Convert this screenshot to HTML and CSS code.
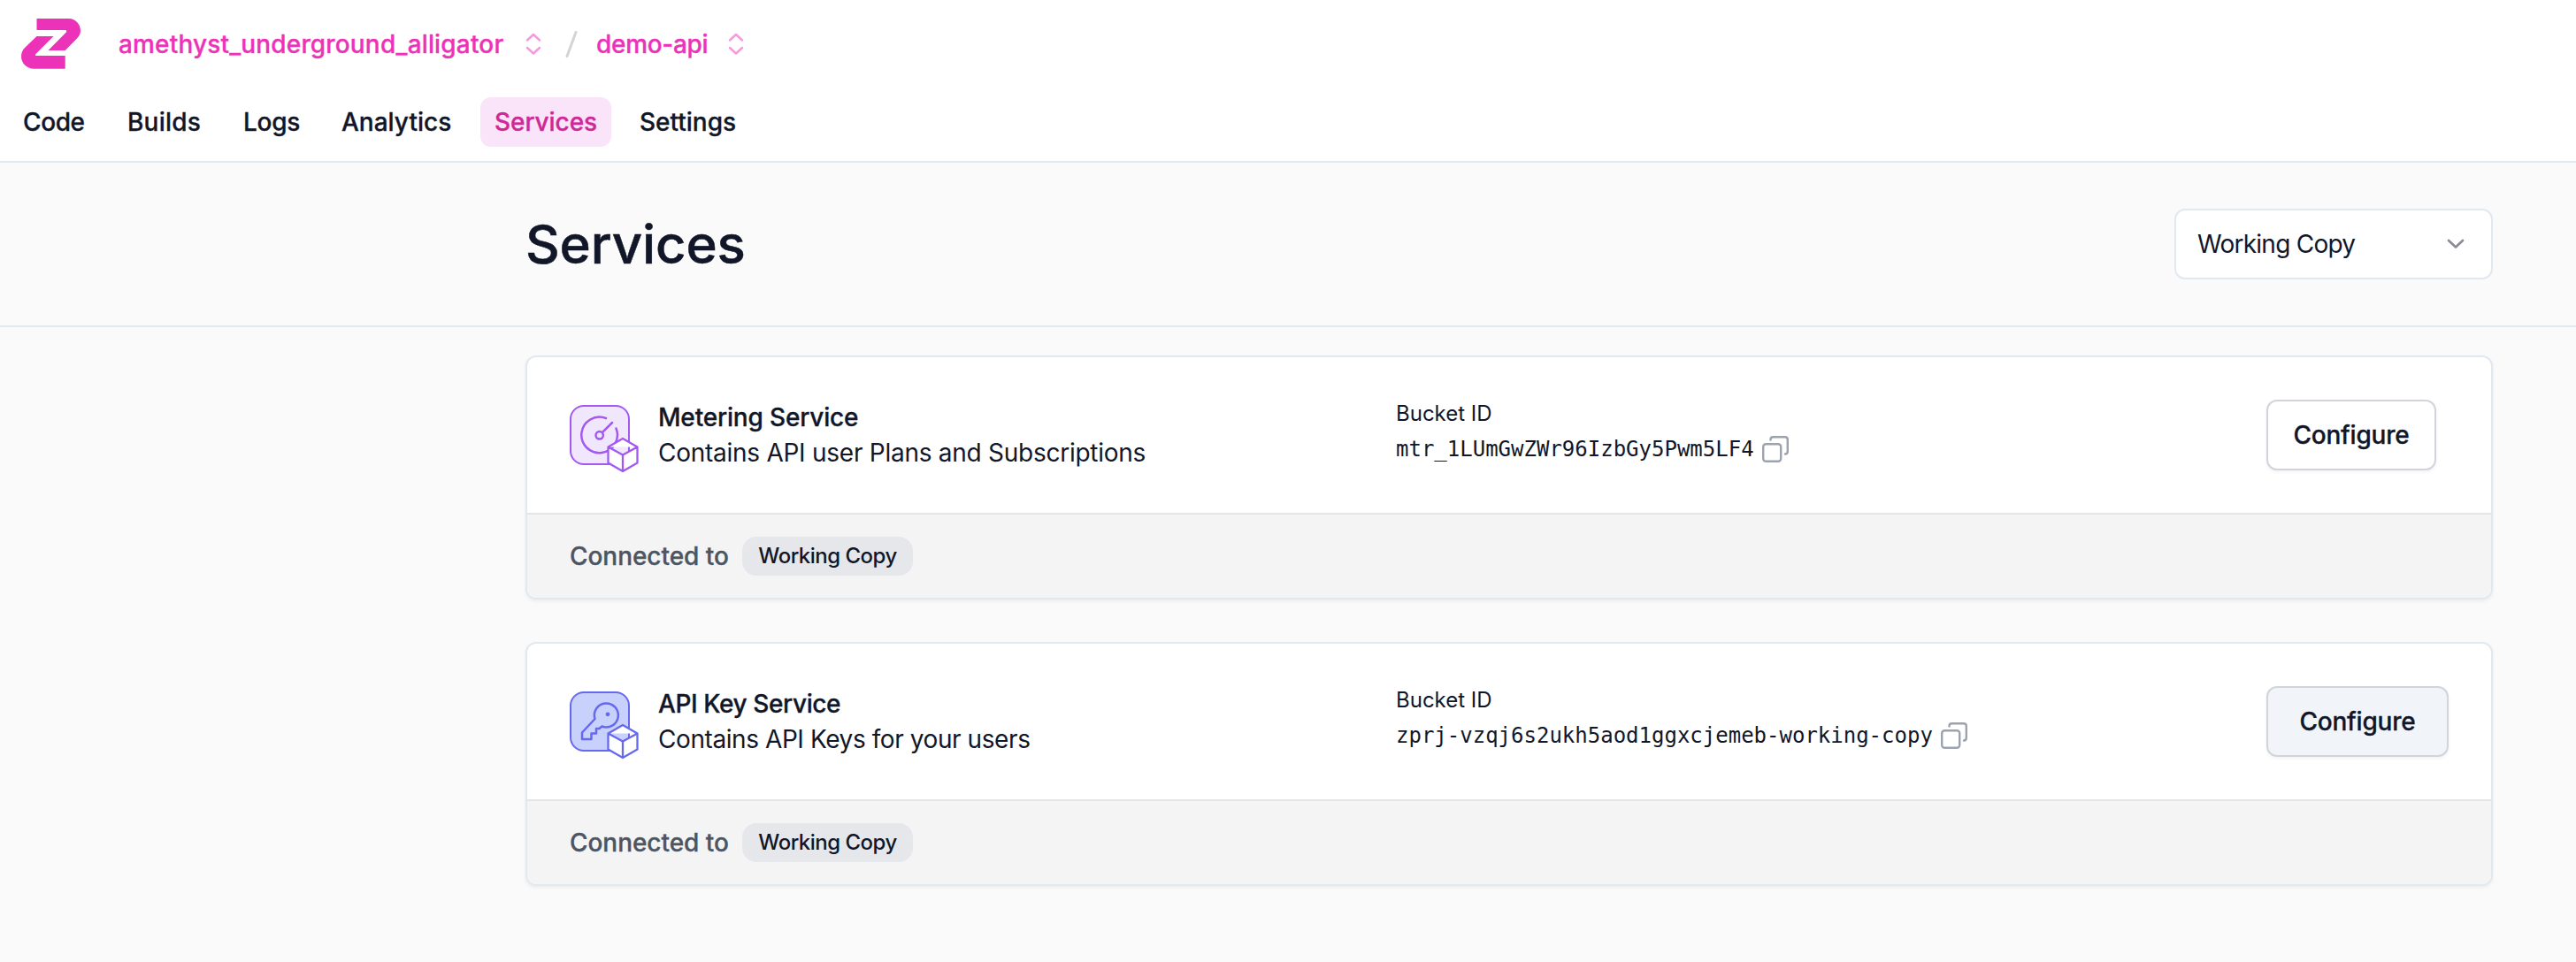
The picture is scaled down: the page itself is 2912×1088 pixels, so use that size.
FILE: index.html
```html
<!DOCTYPE html>
<html lang="en">
<head>
<meta charset="utf-8">
<title>Services</title>
<link rel="stylesheet" href="styles.css">
</head>
<body>
<header class="topbar">
  <div class="crumbs">
    <svg class="logo" viewBox="0 0 68 58" width="68" height="58"><path d="M17.500 0H54C61.500 0 67 6.500 67 13.500C67 17.500 65.500 20 63 22.500L49.700 36H30.500L50.800 15.500Q52.200 13 49.500 13H17.500Z"/><path d="M17.500 20H36.500L16 40.500V42H49.700V56.700H14C6.500 56.700 0 50.500 0 43C0 39 1.500 35.500 4 33Z"/></svg>
    <span class="crumb crumb-account">amethyst_underground_alligator</span>
    <svg class="updown" viewBox="0 0 18 26" width="18" height="26"><path d="M2 8.500L9 2L16 8.500M2 17L9 23.500L16 17"/></svg>
    <svg class="slash" viewBox="0 0 14 30" width="14" height="30"><path d="M12 1.500L2 28.500"/></svg>
    <span class="crumb crumb-project">demo-api</span>
    <svg class="updown" viewBox="0 0 18 26" width="18" height="26"><path d="M2 8.500L9 2L16 8.500M2 17L9 23.500L16 17"/></svg>
  </div>
  <nav class="tabs">
    <a class="tab tab-code">Code</a>
    <a class="tab tab-builds">Builds</a>
    <a class="tab tab-logs">Logs</a>
    <a class="tab tab-analytics">Analytics</a>
    <a class="tab tab-services active">Services</a>
    <a class="tab tab-settings">Settings</a>
  </nav>
</header>
<section class="heading">
  <h1 class="title">Services</h1>
  <div class="select"><span class="select-text">Working Copy</span>
    <svg viewBox="0 0 20 12" width="20" height="12"><path d="M2 2L10 9.500L18 2"/></svg>
  </div>
</section>
<main class="cards">
  <article class="card">
    <div class="body">
      <svg class="icon metering" viewBox="0 0 80 78" width="80" height="78">
        <rect class="tile" x="1" y="1" width="66" height="66" rx="15"/>
        <path class="line" d="M41 15A20.300 20.300 0 1 0 52.500 26.500M36.800 31.200L48 20"/>
        <circle class="line" cx="33.700" cy="34.300" r="4.200"/>
        <path class="cube" d="M60 38L76.500 47.500V65.500L60 75L43.500 65.500V47.500ZM43.500 47.500L60 56.500L76.500 47.500M60 56.500V75"/>
      </svg>
      <div class="info"><span class="name name-metering">Metering Service</span><span class="desc desc-metering">Contains API user Plans and Subscriptions</span></div>
      <div class="bucket"><span class="label">Bucket ID</span>
        <div class="id"><code>mtr_1LUmGwZWr96IzbGy5Pwm5LF4</code><svg viewBox="0 0 30 30" width="30" height="30"><rect x="1.200" y="9.200" width="20" height="19.600" rx="3"/><path d="M9.500 4.500V4Q9.500 1.200 12.300 1.200H25.800Q28.800 1.200 28.800 4.200V17.500Q28.800 20.500 26 20.500"/></svg></div>
      </div>
      <button class="configure">Configure</button>
    </div>
    <footer class="foot"><span class="connected">Connected to</span><span class="badge">Working Copy</span></footer>
  </article>
  <article class="card">
    <div class="body">
      <svg class="icon apikey" viewBox="0 0 80 78" width="80" height="78">
        <rect class="tile" x="1" y="1" width="66" height="66" rx="15"/>
        <path class="line" d="M28.500 31A13.500 13.500 0 1 1 36.500 39.500L33.500 42H30V47.500H24.500V54H14V46.500Z"/>
        <circle class="dot" cx="43" cy="25.800" r="2.400"/>
        <path class="cube" d="M60 38L76.500 47.500V65.500L60 75L43.500 65.500V47.500ZM43.500 47.500L60 56.500L76.500 47.500M60 56.500V75"/>
      </svg>
      <div class="info"><span class="name name-apikey">API Key Service</span><span class="desc desc-apikey">Contains API Keys for your users</span></div>
      <div class="bucket"><span class="label">Bucket ID</span>
        <div class="id"><code>zprj-vzqj6s2ukh5aod1ggxcjemeb-working-copy</code><svg viewBox="0 0 30 30" width="30" height="30"><rect x="1.200" y="9.200" width="20" height="19.600" rx="3"/><path d="M9.500 4.500V4Q9.500 1.200 12.300 1.200H25.800Q28.800 1.200 28.800 4.200V17.500Q28.800 20.500 26 20.500"/></svg></div>
      </div>
      <button class="configure hovered">Configure</button>
    </div>
    <footer class="foot"><span class="connected">Connected to</span><span class="badge">Working Copy</span></footer>
  </article>
</main>
</body>
</html>
```
FILE: styles.css
```css
* { box-sizing: border-box; }
body { margin: 0; min-height: 1088px; background: #fafafa; color: #111729; font-family: Inter, sans-serif; font-size: 28px; font-weight: 500; line-height: 40px; white-space: nowrap; }
svg { flex: none; fill: none; stroke-linecap: round; stroke-linejoin: round; }

.topbar { height: 184px; background: #fff; border-bottom: 2px solid #e2e8f0; padding: 20px 10px 0 24px; }
.crumbs { display: flex; align-items: center; height: 60px; color: #ec32b9; }
.logo { fill: #ec32b9; }
.crumb, .tab, .name, .configure, .connected { -webkit-text-stroke: .3px currentColor; }
.crumb-account { margin-left: 42px; width: 436px; letter-spacing: .16px; }
.updown { stroke: #f59add; stroke-width: 2.5; margin-left: 24px; }
.slash { stroke: #d4d4d4; stroke-width: 3; margin-left: 27px; }
.crumb-project { margin-left: 21px; width: 125px; letter-spacing: -.3px; }
.tabs { display: flex; gap: 16px; margin: 30px 0 0 -13px; }
.tab { height: 56px; line-height: 56px; border-radius: 12px; padding: 0 15px; }
.tab-code { width: 102px; letter-spacing: -.4px; }
.tab-builds { width: 115px; letter-spacing: .2px; }
.tab-logs { width: 95px; letter-spacing: -.3px; }
.tab-analytics { width: 156px; }
.tab-services { width: 148px; padding-left: 16px; letter-spacing: -.08px; }
.tab-settings { padding-left: 16px; }
.tab.active { background: #fae4fa; color: #cf2997; }

.heading { height: 186px; border-bottom: 2px solid #e2e8f0; padding: 0 94px 0 594px; display: flex; align-items: center; justify-content: space-between; }
.title { margin: 0; font-size: 60px; font-weight: 500; line-height: 72px; letter-spacing: -.15px; -webkit-text-stroke: .5px currentColor; }
.select { width: 360px; height: 80px; border: 2px solid #e2e8f0; border-radius: 12px; background: #fff; padding: 0 30px 0 24px; display: flex; align-items: center; justify-content: space-between; font-weight: 400; }
.select-text { letter-spacing: -.75px; }
.select svg { stroke: #8b8c96; stroke-width: 2.7; }

.cards { padding: 32px 94px 0 594px; display: grid; gap: 48px; }
.card { height: 276px; border: 2px solid #e2e8f0; border-radius: 12px; background: #fff; overflow: hidden; box-shadow: 0 2px 4px rgba(0, 0, 0, .06); }
.body { height: 176px; padding: 48px; display: grid; grid-template-columns: 100px 834px 984px 206px; align-items: start; }
.icon { margin-top: 6px; stroke-width: 2; }
.metering { stroke: #a259f0; }
.metering .tile { fill: #f1e7fd; }
.apikey { stroke: #6668ee; }
.apikey .tile { fill: #c8d1fc; }
.apikey .dot { fill: #6668ee; stroke: none; }
.line { stroke-width: 2.5; }
.cube { fill: #fff; stroke-width: 2.3; }
.info, .bucket { display: flex; flex-direction: column; }
.name-metering { letter-spacing: -.18px; }
.name-apikey { letter-spacing: -.4px; }
.desc { font-weight: 400; }
.desc-metering { letter-spacing: -.26px; }
.desc-apikey { letter-spacing: -.42px; }
.label { font-size: 24px; line-height: 32px; font-weight: 400; }
.id { display: flex; align-items: center; gap: 9px; margin-top: 6px; font-weight: 400; }
.id svg { stroke: #9ca3af; stroke-width: 2.4; }
code { font: 400 24px/36px "DejaVu Sans Mono", monospace; }
.configure { width: 192px; height: 80px; padding: 0; border: 2px solid #d1d5db; border-radius: 12px; background: #fff; color: inherit; font: inherit; letter-spacing: -.2px; box-shadow: 0 2px 4px rgba(0, 0, 0, .05); }
.configure.hovered { width: 206px; background: #f1f5f9; }
.foot { height: 96px; border-top: 2px solid #e5e5e5; background: #f4f4f4; padding: 0 48px; display: flex; align-items: center; color: #4b5563; }
.connected { width: 179px; letter-spacing: -.05px; }
.badge { margin-left: 16px; width: 193px; height: 44px; line-height: 44px; border-radius: 16px; background: #e5e7eb; color: #111729; font-size: 24px; font-weight: 500; letter-spacing: -.5px; text-align: center; }
```
